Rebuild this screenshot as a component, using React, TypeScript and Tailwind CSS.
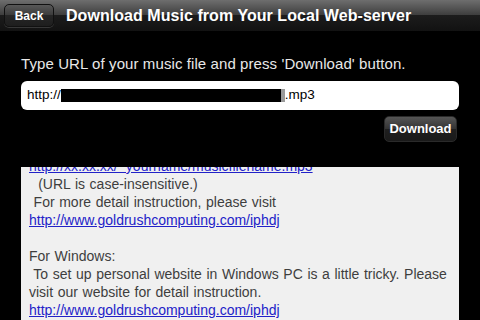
export default function App() {
  const font = { fontFamily: '"Liberation Sans", Arial, Helvetica, sans-serif' };
  return (
    <div className="flex h-[320px] w-[480px] flex-col overflow-hidden bg-black" style={font}>
      {/* nav bar */}
      <div className="flex h-[31px] items-center bg-[linear-gradient(#6e6e6e,#3c3c3c_50%,#1c1c1c_50%,#121212)] px-[4px]">
        <button
          type="button"
          className="flex h-[23px] w-[50px] items-center justify-center rounded-[5px] border border-[#111] bg-[linear-gradient(#585858,#3a3a3a_50%,#262626_50%,#1e1e1e)] text-[12px] font-bold text-white shadow-[0_1px_0_rgba(255,255,255,0.15)]"
        >
          Back
        </button>
        <div className="ml-[12px] text-[16px] font-bold tracking-[0.05px] text-white">Download Music from Your Local Web-server</div>
      </div>

      <div className="flex flex-1 flex-col px-[21px] pt-[24px]">
        <p className="text-[15px] leading-[18px] tracking-[0.09px] text-[#e8e8e8]">
          Type URL of your music file and press 'Download' button.
        </p>

        <div className="mt-[8px] flex h-[29px] w-[438px] items-center rounded-[6px] bg-white px-[6px] text-[13.5px] text-black">
          <span>http://</span>
          <span className="h-[13px] w-[220px] bg-black" />
          <span className="h-[13px] w-[4px] bg-[#9a9a9a]" />
          <span>.mp3</span>
        </div>

        <div className="mt-[6px] flex justify-end pr-[2px]">
          <button
            type="button"
            className="flex h-[26px] w-[73px] items-center justify-center rounded-[5px] border border-[#2a2a2a] bg-[linear-gradient(#555,#333_50%,#1f1f1f_50%,#1a1a1a)] text-[13px] font-bold text-white"
          >
            Download
          </button>
        </div>

        <div className="mt-[25px] flex-1 overflow-hidden bg-[#f0f0f0] pl-[8px] text-[14px] leading-[18px] text-[#3e3e3e] [word-spacing:0.7px]">
          <div className="mt-[-10px] whitespace-pre">
            <div className="text-[#2222c8] underline [word-spacing:0px]">http://xx.xx.xx/~yourname/musicfilename.mp3</div>
            <div>  (URL is case-insensitive.)</div>
            <div> For more detail instruction, please visit</div>
            <div className="text-[#2222c8] underline [word-spacing:0px]">http://www.goldrushcomputing.com/iphdj</div>
            <div>&nbsp;</div>
            <div>For Windows:</div>
            <div> To set up personal website in Windows PC is a little tricky. Please</div>
            <div>visit our website for detail instruction.</div>
            <div className="text-[#2222c8] underline [word-spacing:0px]">http://www.goldrushcomputing.com/iphdj</div>
          </div>
        </div>
      </div>
    </div>
  );
}
